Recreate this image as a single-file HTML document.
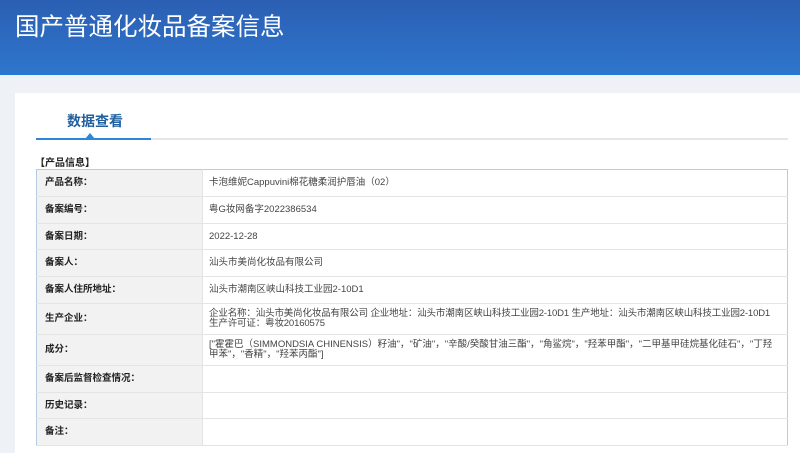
<!DOCTYPE html>
<html><head><meta charset="utf-8"><style>
*{margin:0;padding:0;box-sizing:border-box}
body{width:800px;height:453px;overflow:hidden;background:#eef2f6;font-family:"Liberation Sans","Noto Sans CJK SC",sans-serif;position:relative}
.hd{position:absolute;left:0;top:0;width:800px;height:75px;background:linear-gradient(180deg,#2b5fb3 0%,#2e75cc 100%);border-bottom:2px solid #1f78dc}
.hd h1{position:absolute;left:15px;top:8px;font-size:24.5px;font-weight:normal;color:#fff;letter-spacing:0}
.card{position:absolute;left:15px;top:93px;width:785px;height:360px;background:#fff}
.tab{position:absolute;left:52px;top:18px;font-size:14px;font-weight:bold;color:#1f5f9f}
.line{position:absolute;left:21px;top:45px;width:752px;height:2px;background:#e6e6e6}
.line i{position:absolute;left:0;top:0;width:115px;height:2px;background:#2b87d8}
.tri{position:absolute;left:70px;top:40px;width:0;height:0;border-left:5px solid transparent;border-right:5px solid transparent;border-bottom:6px solid #2b87d8}
.sec{position:absolute;left:20px;top:61px;font-size:10px;font-weight:bold;color:#222}
table{position:absolute;left:21px;top:76px;width:752px;border-collapse:collapse;border:1px solid #b7cbe6;font-size:9.5px;color:#333}
td{border-bottom:1px solid #e4e4e4;padding:0 8px;line-height:10px;white-space:nowrap}
td.l{width:166px;background:#f2f2f2;font-weight:bold;color:#222;border-right:1px solid #e4e4e4}
td.v{padding-left:6px;color:#444}
</style></head><body>
<div class="hd"><h1>国产普通化妆品备案信息</h1></div>
<div class="card">
<div class="tab">数据查看</div>
<div class="line"><i></i></div>
<div class="tri"></div>
<div class="sec">【产品信息】</div>
<table>
<tr style="height:27px"><td class="l">产品名称：</td><td class="v">卡泡维妮Cappuvini棉花糖柔润护唇油（02）</td></tr>
<tr style="height:27px"><td class="l">备案编号：</td><td class="v">粤G妆网备字2022386534</td></tr>
<tr style="height:26px"><td class="l">备案日期：</td><td class="v">2022-12-28</td></tr>
<tr style="height:27px"><td class="l">备案人：</td><td class="v">汕头市美尚化妆品有限公司</td></tr>
<tr style="height:27px"><td class="l">备案人住所地址：</td><td class="v">汕头市潮南区峡山科技工业园2-10D1</td></tr>
<tr style="height:31px"><td class="l">生产企业：</td><td class="v" style="letter-spacing:-0.15px">企业名称：汕头市美尚化妆品有限公司 企业地址：汕头市潮南区峡山科技工业园2-10D1 生产地址：汕头市潮南区峡山科技工业园2-10D1<br>生产许可证：粤妆20160575</td></tr>
<tr style="height:31px"><td class="l">成分：</td><td class="v">["霍霍巴（SIMMONDSIA CHINENSIS）籽油"，"矿油"，"辛酸/癸酸甘油三酯"，"角鲨烷"，"羟苯甲酯"，"二甲基甲硅烷基化硅石"，"丁羟<br>甲苯"，"香精"，"羟苯丙酯"]</td></tr>
<tr style="height:27px"><td class="l">备案后监督检查情况：</td><td class="v"></td></tr>
<tr style="height:26px"><td class="l">历史记录：</td><td class="v"></td></tr>
<tr style="height:27px"><td class="l">备注：</td><td class="v"></td></tr>
</table>
</div>
</body></html>
